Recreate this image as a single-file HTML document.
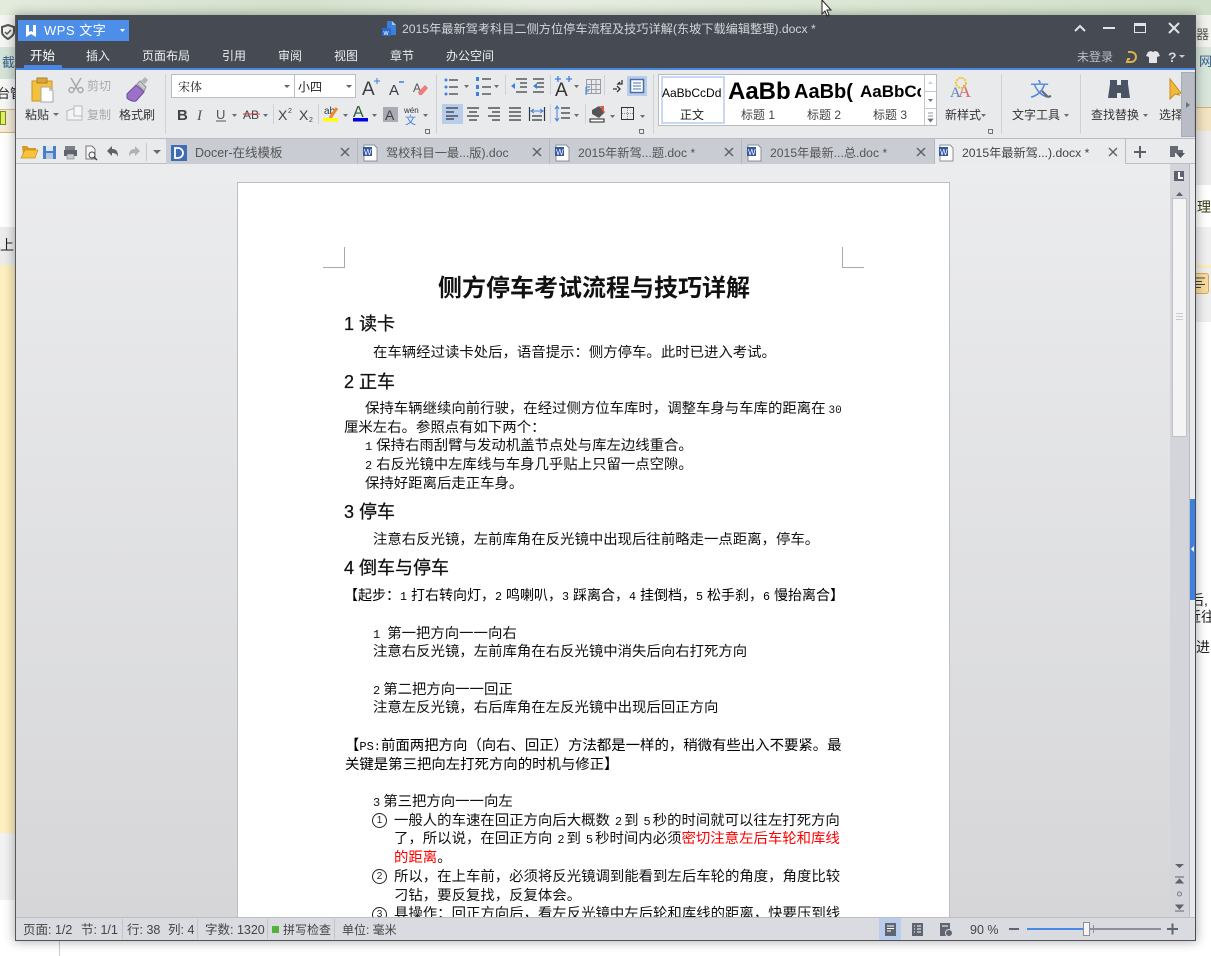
<!DOCTYPE html>
<html><head><meta charset="utf-8"><title>WPS 文字</title>
<style>
html,body{margin:0;padding:0;width:1211px;height:956px;overflow:hidden;background:#fff}
body{position:relative;font-family:"Liberation Sans","Noto Sans CJK SC",sans-serif}
.a{position:absolute}
.t{position:absolute;white-space:nowrap;font-size:12px;line-height:16px;color:#333}
#doc .l{position:absolute;white-space:nowrap;font-size:14.4px;line-height:20px;margin-top:1px;color:#111;font-family:"Liberation Sans","WenQuanYi Zen Hei",sans-serif}
#doc .h{position:absolute;white-space:nowrap;font-size:18px;line-height:24px;margin-top:1px;color:#111;-webkit-text-stroke:.25px #111;font-family:"Liberation Sans","Noto Sans CJK SC",sans-serif}
#doc .n{font-family:"Liberation Mono",monospace;font-size:12px}
#doc .d{font-family:"Liberation Mono",monospace;font-size:12px;margin:0 2px 0 5px}
#doc .b{font-family:"Liberation Mono",monospace;font-size:11.67px;margin-right:4px}
.m{color:#ecedef;font-size:12px;top:48px}
.sep{position:absolute;width:1px;background:#cfd1d6}
.tab{position:absolute;top:139px;height:25px;background:#c9ccd3;border-right:1px solid #b4b7be;box-sizing:border-box}
.tt{position:absolute;white-space:nowrap;font-size:12.2px;line-height:16px;top:145px;color:#555}
.s{position:absolute;white-space:nowrap;font-size:12.5px;line-height:14px;top:923px;color:#444}
.num{position:absolute;width:13px;height:13px;border:1px solid #222;border-radius:50%;font-size:10px;line-height:13px;margin-top:1px;text-align:center;color:#222;font-family:"Liberation Sans",sans-serif}
.st{position:absolute;font-family:"Liberation Sans",sans-serif;white-space:nowrap;color:#000;overflow:hidden}
</style></head><body>
<!-- desktop background -->
<div class="a" style="left:0;top:0;width:1211px;height:15px;background:linear-gradient(90deg,#e3ebdc,#d5e1cd 25%,#e6ede0 45%,#dce7d4 70%,#d0dfca)"></div>
<div class="a" style="left:0;top:15px;width:15px;height:32px;background:#f4f4f2"></div>
<div class="a" style="left:0;top:47px;width:15px;height:32px;background:#d3e3d7"></div>
<div class="a" style="left:0;top:79px;width:15px;height:30px;background:#f6f6f5"></div>
<div class="a" style="left:0;top:109px;width:15px;height:22px;background:#f4ead6;border-top:1px solid #d9b878;border-bottom:1px solid #d9b878"></div>
<div class="a" style="left:0;top:227px;width:15px;height:38px;background:#ececec"></div>
<div class="a" style="left:0;top:265px;width:15px;height:568px;background:#fdf0be"></div>
<div class="a" style="left:0;top:833px;width:15px;height:123px;background:#f2f2f2"></div>
<div class="a" style="left:0;top:900px;width:15px;height:56px;background:#fff"></div>
<div class="a" style="left:59px;top:940px;width:1px;height:16px;background:#ccc"></div>
<div class="t" style="left:0;top:55px;font-size:13px;color:#35608d;width:15px;overflow:hidden;direction:rtl">截</div>
<div class="t" style="left:-3px;top:86px;font-size:13px;color:#222;width:18px;overflow:hidden">台管</div>
<div class="t" style="left:0;top:237px;font-size:14px;color:#222">上</div>
<svg class="a" style="left:1px;top:24px" width="14" height="16"><path d="M7 1l6 2v5c0 3-3 5-6 7-3-2-6-4-6-7V3z" fill="none" stroke="#555" stroke-width="2"/><path d="M4 8l2 2 4-4" fill="none" stroke="#555" stroke-width="1.5"/></svg>
<div class="a" style="left:0;top:111px;width:6px;height:14px;background:#e9ef5a;border:1px solid #6a8f2d;box-sizing:border-box"></div>
<div class="a" style="left:1196px;top:15px;width:15px;height:32px;background:#f1f1ee"></div>
<div class="a" style="left:1196px;top:47px;width:15px;height:60px;background:#d8e6db"></div>
<div class="a" style="left:1196px;top:107px;width:15px;height:24px;background:#f3e4c4;border-top:1px solid #d7b36f;border-bottom:1px solid #d7b36f"></div>
<div class="a" style="left:1196px;top:131px;width:15px;height:54px;background:#ececec"></div>
<div class="a" style="left:1196px;top:185px;width:15px;height:42px;background:#fff"></div>
<div class="a" style="left:1196px;top:227px;width:15px;height:38px;background:#f0f0f0"></div>
<div class="a" style="left:1196px;top:265px;width:15px;height:3px;background:#fbeeb8"></div>
<div class="a" style="left:1196px;top:268px;width:15px;height:54px;background:#efefef"></div>
<div class="a" style="left:1196px;top:273px;width:13px;height:21px;background:#f8dc9e;border:1px solid #d9a75c;border-left:0;box-sizing:border-box;border-radius:0 3px 3px 0"></div>
<svg class="a" style="left:1196px;top:277px" width="12" height="14"><path d="M0 1h9M0 4.500h6M0 7.500h9M0 10.500h5" stroke="#444" stroke-width="1"/></svg>
<div class="t" style="left:1196px;top:27px;font-size:13px;color:#555;width:15px;overflow:hidden">器</div>
<div class="t" style="left:1199px;top:54px;font-size:13px;color:#35608d">网</div>
<div class="t" style="left:1183px;top:199px;font-size:14px;color:#3c3c10">处理</div>
<div class="t" style="left:1190px;top:592px;font-size:14px;color:#222">后,</div>
<div class="t" style="left:1187px;top:609px;font-size:14px;color:#222">近往</div>
<div class="t" style="left:1196px;top:639px;font-size:14px;color:#222;width:15px;overflow:hidden">进表</div>

<!-- window -->
<div class="a" style="left:15px;top:15px;width:1181px;height:926px;background:#e8e9eb;box-shadow:0 0 10px 1px rgba(0,0,0,.3)"></div>
<div class="a" style="left:15px;top:15px;width:1181px;height:53px;background:#464a53"></div>
<div class="a" style="left:15px;top:68px;width:1181px;height:2px;background:#4a86e3"></div>
<div class="a" style="left:18px;top:20px;width:111px;height:21px;background:#4d8fe8"></div>
<svg class="a" style="left:24px;top:24px" width="14" height="14"><path d="M2 1v12l5-3 5 3V1h-3v7L7 7 5 8V1z" fill="#fff"/></svg>
<div class="t" style="left:44px;top:22px;color:#fff;font-size:13px;line-height:18px;letter-spacing:.5px">WPS 文字</div>
<svg class="a" style="left:119px;top:28px" width="8" height="5"><path d="M1 1h5L3.500 4z" fill="#fff"/></svg>
<svg class="a" style="left:381px;top:20px" width="18" height="17"><path d="M6 1h5l4 4v10H6z" fill="#3d7fdc"/><path d="M11 1l4 4h-4z" fill="#a8c8f3"/><rect x="1" y="8" width="9" height="8" fill="#2b6bc8"/><text x="2.500" y="15" font-size="7" fill="#fff" font-family="Liberation Sans">w</text></svg>
<div class="t" style="left:402px;top:20px;color:#d3d5d9;font-size:12.2px;line-height:18px">2015年最新驾考科目二侧方位停车流程及技巧详解(东坡下载编辑整理).docx *</div>
<svg class="a" style="left:1070px;top:20px" width="116" height="16"><path d="M5 11l5-5 5 5" fill="none" stroke="#e2e4e7" stroke-width="2"/><rect x="33" y="7" width="12" height="2" fill="#e2e4e7"/><rect x="64.500" y="3.500" width="11" height="9" fill="none" stroke="#e2e4e7" stroke-width="1"/><rect x="64" y="3" width="12" height="3" fill="#e2e4e7"/><path d="M99 3l10 10M109 3l-10 10" stroke="#e2e4e7" stroke-width="2"/></svg>

<div class="t m" style="left:30px;color:#fff;font-size:12.500px">开始</div>
<div class="t m" style="left:86px">插入</div>
<div class="t m" style="left:142px">页面布局</div>
<div class="t m" style="left:222px">引用</div>
<div class="t m" style="left:278px">审阅</div>
<div class="t m" style="left:334px">视图</div>
<div class="t m" style="left:390px">章节</div>
<div class="t m" style="left:446px">办公空间</div>
<div class="a" style="left:24px;top:65px;width:38px;height:3px;background:#4a86e3"></div>
<div class="t" style="left:1077px;top:49px;color:#bcbfc5">未登录</div>
<svg class="a" style="left:1124px;top:49px" width="68" height="15"><path d="M4 3h3a5 5 0 0 1 0 10H3l1-3h2" fill="none" stroke="#d8b24a" stroke-width="2"/><path d="M24 3l3-1 2 1 2-1 3 1 2 4-3 1v6h-8V8l-3-1z" fill="#e4e5e8"/><text x="44" y="13" font-size="14" font-weight="bold" fill="#d5d7da" font-family="Liberation Sans">?</text><path d="M55 6h6l-3 3z" fill="#c8cace"/></svg>

<!-- ribbon -->
<div class="a" style="left:16px;top:70px;width:1179px;height:68px;background:#e9eaec;border-bottom:1px solid #b9bbc1"></div>
<div class="sep" style="left:165px;top:74px;height:60px"></div>
<div class="sep" style="left:436px;top:74px;height:60px"></div>
<div class="sep" style="left:505px;top:75px;height:20px"></div>
<div class="sep" style="left:550px;top:75px;height:20px"></div>
<div class="sep" style="left:604px;top:75px;height:20px"></div>
<div class="sep" style="left:550px;top:104px;height:20px"></div>
<div class="sep" style="left:585px;top:104px;height:20px"></div>
<div class="sep" style="left:273px;top:104px;height:20px"></div>
<div class="sep" style="left:318px;top:104px;height:20px"></div>
<div class="sep" style="left:653px;top:74px;height:60px"></div>
<div class="sep" style="left:1001px;top:74px;height:60px"></div>
<div class="sep" style="left:1080px;top:74px;height:60px"></div>

<svg class="a" style="left:0;top:0" width="1211" height="956">
<!-- paste -->
<path d="M32 81h20v20H32z" fill="#f2c23f" stroke="#c9922a"/><rect x="37" y="78" width="10" height="5" fill="#d9a63a" stroke="#b08026"/><path d="M41 87h8l4 4v11H41z" fill="#fff" stroke="#a4a6aa"/><path d="M49 87l4 4h-4z" fill="#ccc"/>
<!-- cut -->
<path d="M71 78l7 12M81 78l-7 12" stroke="#a8a9ac" stroke-width="1.500"/><circle cx="71.500" cy="90" r="2.500" fill="none" stroke="#a8a9ac" stroke-width="1.500"/><circle cx="80.500" cy="90" r="2.500" fill="none" stroke="#a8a9ac" stroke-width="1.500"/>
<!-- copy -->
<path d="M72 109h8l2 2v9H67v-9z" fill="#f4f4f4" stroke="#b8b9bb" /><rect x="74" y="106" width="8" height="10" fill="#f6f6f6" stroke="#b8b9bb"/>
<!-- brush -->
<path d="M127 94l9-9 8 7-8 9c-3 1-7-1-9-3z" fill="#9c72c9" stroke="#6d4a9c"/><path d="M137 84l3-3 6 6-2 4z" fill="#c9cacd" stroke="#8e8f93"/><path d="M141 81l4-4 3 3-3 4z" fill="#b3b4b8"/>
<!-- arrows small -->
<g fill="#6a6d74">
<path d="M53 113h6l-3 3z"/><path d="M232 114h5l-2.500 3z"/><path d="M263 114h5l-2.500 3z"/><path d="M343 114h5l-2.500 3z"/><path d="M372 114h5l-2.500 3z"/><path d="M423 114h5l-2.500 3z"/>
<path d="M285 87h6l-3 3z"/><path d="M346 87h6l-3 3z"/><path d="M464 85h5l-2.500 3z"/><path d="M494 85h5l-2.500 3z"/><path d="M574 85h5l-2.500 3z"/><path d="M574 114h5l-2.500 3z"/><path d="M610 115h5l-2.500 3z"/><path d="M640 115h5l-2.500 3z"/>
<path d="M981 114h5l-2.500 3z"/><path d="M1064 114h5l-2.500 3z"/><path d="M1143 114h5l-2.500 3z"/>
</g>
<!-- list icons -->
<g stroke="#3a3d44" stroke-width="1.200" fill="none"><path d="M449 80h9M449 87h9M449 94h9M482 79h9M482 87h9M482 94h9"/><path d="M516 79h11M520 83h7M520 87h7M516 92h11M533 79h11M537 83h7M537 87h7M533 92h11"/></g>
<g fill="#3f7fe0"><circle cx="446" cy="80" r="1.500"/><circle cx="446" cy="87" r="1.500"/><circle cx="446" cy="94" r="1.500"/><rect x="476" y="77" width="3" height="4"/><rect x="476" y="85" width="3" height="4"/><rect x="476" y="92" width="3" height="4"/><path d="M511 86l4-3v6zM533 86l4-3v6z" /></g>
<!-- A grow -->
<text x="555" y="96" font-size="19" fill="#333" font-family="Liberation Sans" >A</text><path d="M555 79h6M558 76v6M566 79h6M569 76v6" stroke="#3f7fe0" stroke-width="1.300" fill="none"/>
<g stroke="#9a9da6" fill="none"><path d="M586.500 79.500h14v14h-14zM591.500 79.500v14M596 79.500v14M586.500 84.500h14M586.500 89.500h14"/></g><path d="M586 87v8M586 87h4M586 91h3" stroke="#3f7fe0" fill="none"/>
<path d="M622 80v4h-4l2-2M613 89h4M617 86l3 3-3 3" stroke="#333" stroke-width="1.300" fill="none"/>
<rect x="627" y="76" width="20" height="20" fill="#b9cce9"/><rect x="630.500" y="79.500" width="13" height="13" fill="#fff" stroke="#4a6fa8" stroke-width="1.500"/><path d="M633 83h8M633 86h8M633 89h8" stroke="#4a6fa8"/>
<!-- align -->
<rect x="442" y="104" width="21" height="20" fill="#b9cce9"/>
<g stroke="#33363c" stroke-width="1.200" fill="none"><path d="M446 109h12M446 113h8M446 117h12M446 120h8" transform="translate(0 -1)"/><path d="M467 108h12M469 112h8M467 116h12M469 120h8"/><path d="M488 108h12M492 112h8M488 116h12M492 120h8"/><path d="M509 108h12M509 112h12M509 116h12M509 120h12"/><path d="M529.500 107v14M544.500 107v14M532 116h10M532 120h10"/></g>
<path d="M532 111h10M534 109l-3 2 3 2M540 109l3 2-3 2" stroke="#3f7fe0" fill="none"/>
<g stroke="#33363c" stroke-width="1.200"><path d="M561 108h9M561 113h9M561 118h9"/></g><path d="M557 107v13M555 109l2-3 2 3M555 118l2 3 2-3" stroke="#3f7fe0" fill="none"/>
<path d="M592 110l7-4 6 6-6 6-7-4z" fill="#555"/><path d="M600 106l4 0 0 8z" fill="#e8544a"/><rect x="590" y="119" width="14" height="3" fill="#fff" stroke="#222"/>
<rect x="621.500" y="107.500" width="12" height="12" fill="none" stroke="#333"/><path d="M627.500 108v11M622 113.500h11" stroke="#888" stroke-dasharray="1 1"/>
<!-- dialog corners -->
<g fill="none" stroke="#6d7077"><path d="M425.500 133v-3.500h4v4h-4"/><path d="M639.500 133v-3.500h4v4h-4"/><path d="M988.500 133v-3.500h4v4h-4"/></g>
<!-- font buttons -->
<text x="362" y="95" font-size="19" fill="#3a3d44" font-family="Liberation Sans">A</text><path d="M374 81h6M377 78v6" stroke="#3f7fe0"/>
<text x="389" y="95" font-size="15" fill="#3a3d44" font-family="Liberation Sans">A</text><path d="M399 82h5" stroke="#3f7fe0" stroke-width="1.500"/>
<text x="413" y="92" font-size="12" fill="#555" font-family="Liberation Sans">A</text><path d="M418 92l7-7 3 3-6 7h-3z" fill="#ef7c7c"/>
<text x="177" y="120" font-size="15" font-weight="bold" fill="#444" font-family="Liberation Sans">B</text>
<text x="197" y="120" font-size="15" font-style="italic" fill="#555" font-family="Liberation Serif">I</text>
<text x="216" y="119" font-size="13" fill="#555" font-family="Liberation Sans">U</text><path d="M216 121h10" stroke="#555"/>
<text x="243" y="119" font-size="12" fill="#444" font-family="Liberation Sans">AB</text><path d="M243 114h17" stroke="#d8372f"/>
<text x="278" y="120" font-size="14" fill="#444" font-family="Liberation Sans">X</text><text x="288" y="113" font-size="7" fill="#444" font-family="Liberation Sans">2</text>
<text x="299" y="120" font-size="14" fill="#444" font-family="Liberation Sans">X</text><text x="309" y="122" font-size="7" fill="#444" font-family="Liberation Sans">2</text>
<text x="324" y="114" font-size="10" fill="#3a3d44" font-family="Liberation Sans">ab</text><path d="M330 118l7-10" stroke="#ec8a2c" stroke-width="3"/><rect x="323" y="118" width="15" height="3.500" fill="#ffff00"/>
<text x="353" y="117" font-size="16" fill="#2c5a2e" font-family="Liberation Sans">A</text><rect x="353" y="118" width="15" height="3.500" fill="#0000e0"/>
<rect x="383" y="107" width="15" height="15" fill="#a9acb5"/><text x="385" y="120" font-size="14" fill="#444" font-family="Liberation Sans">A</text>
<text x="404" y="113" font-size="8" fill="#333" font-family="Liberation Sans">wén</text><text x="405" y="124" font-size="11" fill="#3f7fe0" font-family="Liberation Sans,Noto Sans CJK SC">文</text>
<!-- style icons -->
<text x="958" y="97" font-size="18" fill="#d86a76" font-family="Liberation Serif">A</text><text x="950" y="97" font-size="15" fill="#5b80bd" font-family="Liberation Serif">A</text><circle cx="961" cy="83" r="5" fill="none" stroke="#f0c530" stroke-width="2" stroke-dasharray="2 1"/>
<text x="1030" y="96" font-size="19" fill="#4f86df" font-family="Liberation Sans,Noto Sans CJK SC">文</text><path d="M1042 91l6 6M1048 97l3-1" stroke="#666" stroke-width="2" fill="none"/>
<path d="M1110 80h7v5h4v-5h7v4l2 14h-9v-5h-4v5h-9l2-14z" fill="#4a5364"/>
<path d="M1170 79v20l5-5 4 1-1-1 3-1z" fill="#f3b93a" stroke="#c98a1c"/>
</svg>

<div class="t" style="left:25px;top:107px;font-size:12px;color:#333">粘贴</div>
<div class="t" style="left:87px;top:78px;color:#a9aaad">剪切</div>
<div class="t" style="left:87px;top:107px;color:#a9aaad">复制</div>
<div class="t" style="left:119px;top:107px">格式刷</div>
<div class="a" style="left:171px;top:74px;width:185px;height:24px;background:#fff;border:1px solid #bcbec4;box-sizing:border-box"></div>
<div class="a" style="left:294px;top:74px;width:1px;height:24px;background:#bcbec4"></div>
<div class="t" style="left:178px;top:79px;color:#222;font-family:'Liberation Sans','Noto Serif CJK SC',serif">宋体</div>
<div class="t" style="left:298px;top:79px;color:#222">小四</div>
<svg class="a" style="left:284px;top:85px" width="70" height="5"><path d="M0 0h6L3 3z" fill="#666"/><path d="M62 0h6l-3 3z" fill="#666"/></svg>

<!-- styles gallery -->
<div class="a" style="left:658px;top:74px;width:279px;height:52px;background:#fff;border:1px solid #b9bbc1;box-sizing:border-box"></div>
<div class="a" style="left:661px;top:76px;width:64px;height:48px;border:2px solid #c8d9f3;box-sizing:border-box"></div>
<div class="st" style="left:662px;top:85px;width:62px;font-size:12px;line-height:16px">AaBbCcDd</div>
<div class="st" style="left:728px;top:78px;width:64px;font-size:24px;line-height:28px;font-weight:bold">AaBb</div>
<div class="st" style="left:794px;top:80px;width:61px;font-size:20px;line-height:24px;font-weight:bold">AaBb(</div>
<div class="st" style="left:860px;top:82px;width:61px;font-size:17px;line-height:20px;font-weight:bold">AaBbCc</div>
<div class="t" style="left:680px;top:107px;color:#222">正文</div>
<div class="t" style="left:741px;top:107px;color:#444">标题 1</div>
<div class="t" style="left:807px;top:107px;color:#444">标题 2</div>
<div class="t" style="left:873px;top:107px;color:#444">标题 3</div>
<div class="a" style="left:924px;top:75px;width:1px;height:50px;background:#c4c6cb"></div>
<svg class="a" style="left:925px;top:75px" width="11" height="50"><path d="M0 16.500h11M0 33.500h11" stroke="#c4c6cb"/><path d="M3 9h5L5.500 6z" fill="#d0d2d6"/><path d="M3 24h5l-2.500 3z" fill="#70737a"/><path d="M3 38h5M3 41h5M3 44h5L5.500 47z" stroke="#70737a" fill="#70737a" stroke-width=".7"/></svg>
<div class="t" style="left:945px;top:107px">新样式</div>
<div class="t" style="left:1012px;top:107px">文字工具</div>
<div class="t" style="left:1091px;top:107px">查找替换</div>
<div class="t" style="left:1159px;top:107px">选择</div>
<div class="a" style="left:1181px;top:72px;width:14px;height:65px;background:#b9bcc4;border:1px solid #a9acb4;box-sizing:border-box"></div>
<svg class="a" style="left:1185px;top:101px" width="6" height="8"><path d="M1 1l4 3-4 3z" fill="#6c7079"/></svg>

<!-- tabs -->
<div class="a" style="left:16px;top:139px;width:1179px;height:25px;background:#e9eaec;border-bottom:1px solid #bcbec4;box-sizing:border-box"></div>
<div class="tab" style="left:166px;width:192px"></div>
<div class="tab" style="left:358px;width:192px"></div>
<div class="tab" style="left:550px;width:192px"></div>
<div class="tab" style="left:742px;width:193px"></div>
<div class="a" style="left:935px;top:139px;width:191px;height:26px;background:#eaebed;border-right:1px solid #bcbec4;box-sizing:border-box"></div>
<div class="a" style="left:171px;top:145px;width:16px;height:16px;background:#3f6db5"></div>
<svg class="a" style="left:171px;top:145px" width="16" height="16"><path d="M4 3h3a5 5 0 0 1 0 10H4z" fill="none" stroke="#fff" stroke-width="1.800"/></svg>
<div class="tt" style="left:195px;font-size:12.5px">Docer-在线模板</div>
<div class="tt" style="left:386px">驾校科目一最...版).doc</div>
<div class="tt" style="left:578px">2015年新驾...题.doc *</div>
<div class="tt" style="left:770px">2015年最新...总.doc *</div>
<div class="tt" style="left:962px;color:#444">2015年最新驾...).docx *</div>
<svg class="a" style="left:0;top:0" width="1211" height="170">
<!-- tab toolbar -->
<path d="M22 146h5l2 2h7v3H27l-4 4z" fill="#d89a22"/><path d="M25 150h13l-3 8H21z" fill="#f5c33c" stroke="#c98f22" stroke-width=".7"/>
<rect x="43" y="146" width="13" height="13" fill="#4a7ec6"/><rect x="46" y="146" width="7" height="5" fill="#dbe6f5"/><rect x="46" y="153" width="7" height="6" fill="#b4c8e6"/>
<rect x="65" y="146" width="10" height="4" fill="#7c8088"/><rect x="64" y="150" width="13" height="6" fill="#5e626a"/><rect x="67" y="154" width="7" height="5" fill="#c8cad0" stroke="#666" stroke-width=".5"/>
<path d="M86 146h6l3 3v10H86z" fill="#f5f5f5" stroke="#777"/><circle cx="92" cy="155" r="3" fill="none" stroke="#444"/><path d="M94 157l3 3" stroke="#444" stroke-width="1.300"/>
<path d="M107 151l5-5v3c5 0 6 3 6 8-1-3-3-4-6-4v3z" fill="#5e626b"/><path d="M140 151l-5-5v3c-5 0-6 3-6 8 1-3 3-4 6-4v3z" fill="#b0b2b8"/>
<rect x="146" y="143" width="1" height="18" fill="#c8cad0"/><path d="M153 150h8l-4 4z" fill="#666a72"/>
<g id="w"><path d="M364 145h10l3 3v13h-13z" fill="#fff" stroke="#8b8f97"/><rect x="363" y="147" width="9" height="9" fill="#33589f"/><text x="364" y="155" font-size="8" fill="#fff" font-family="Liberation Sans">W</text></g>
<g transform="translate(192 0)"><path d="M364 145h10l3 3v13h-13z" fill="#fff" stroke="#8b8f97"/><rect x="363" y="147" width="9" height="9" fill="#33589f"/><text x="364" y="155" font-size="8" fill="#fff" font-family="Liberation Sans">W</text></g>
<g transform="translate(384 0)"><path d="M364 145h10l3 3v13h-13z" fill="#fff" stroke="#8b8f97"/><rect x="363" y="147" width="9" height="9" fill="#33589f"/><text x="364" y="155" font-size="8" fill="#fff" font-family="Liberation Sans">W</text></g>
<g transform="translate(576 0)"><path d="M364 145h10l3 3v13h-13z" fill="#fff" stroke="#8b8f97"/><rect x="363" y="147" width="9" height="9" fill="#33589f"/><text x="364" y="155" font-size="8" fill="#fff" font-family="Liberation Sans">W</text></g>
<g stroke="#5a5d64" stroke-width="1.300" fill="none"><path d="M341 148l8 8M349 148l-8 8"/><path d="M533 148l8 8M541 148l-8 8"/><path d="M725 148l8 8M733 148l-8 8"/><path d="M917 148l8 8M925 148l-8 8"/><path d="M1109 148l8 8M1117 148l-8 8"/></g>
<path d="M1134 152h12M1140 146v12" stroke="#5c6068" stroke-width="2"/>
<path d="M1170 146h8v4h5v3h-8v4h-5z" fill="#666a72"/><path d="M1176 153h9l-4.500 5z" fill="#50545c"/>
</svg>

<!-- document area -->
<div class="a" style="left:16px;top:164px;width:1154px;height:753px;background:linear-gradient(#ebecee,#d6d6d8)"></div>
<div class="a" style="left:1170px;top:164px;width:19px;height:753px;background:#d3d5da"></div>
<div class="a" style="left:1189px;top:164px;width:6px;height:753px;background:#e8e9eb;border-left:1px solid #b9bbc1;box-sizing:border-box"></div>
<div class="a" style="left:1190px;top:499px;width:5px;height:101px;background:#3f7fe0"></div>
<svg class="a" style="left:1190px;top:545px" width="5" height="8"><path d="M4 1v6L1 4z" fill="#fff"/></svg>
<div class="a" style="left:1172px;top:198px;width:15px;height:239px;background:#f4f4f5;border:1px solid #c0c2c8;box-sizing:border-box"></div>
<svg class="a" style="left:1170px;top:164px" width="19" height="753">
<rect x="4" y="7" width="10" height="10" fill="#5d6270"/><path d="M9 8v6h4" stroke="#fff" stroke-width="2" fill="none"/>
<path d="M6 32h7l-3.500-4z" fill="#5d6270"/>
<path d="M6 149.500h7M6 152.500h7M6 155.500h7" stroke="#c8cace"/>
<path d="M5 700h9l-4.500 4z" fill="#5d6270"/>
<path d="M5 713h9M6 719h7l-3.500-4zM6 710h0" stroke="#5d6270" fill="#5d6270" stroke-width="1"/>
<circle cx="9.500" cy="730" r="2" fill="none" stroke="#777b84"/>
<path d="M5 747h9M6 741h7l-3.500 4z" stroke="#5d6270" fill="#5d6270" stroke-width="1"/>
</svg>

<div id="doc" class="a" style="left:0;top:0;width:1211px;height:917px;overflow:hidden">
<div class="a" style="left:237px;top:182px;width:713px;height:760px;background:#fff;border:1px solid #bdbec2;box-sizing:border-box;border-bottom:0"></div>
<div class="a" style="left:323px;top:267px;width:22px;height:1px;background:#a9a9a9"></div>
<div class="a" style="left:344px;top:247px;width:1px;height:21px;background:#a9a9a9"></div>
<div class="a" style="left:842px;top:267px;width:22px;height:1px;background:#a9a9a9"></div>
<div class="a" style="left:842px;top:247px;width:1px;height:21px;background:#a9a9a9"></div>

<div class="h" style="left:438px;top:273px;font-size:24px;line-height:30px;font-weight:bold;-webkit-text-stroke:0">侧方停车考试流程与技巧详解</div>
<div class="h" style="left:344px;top:311px">1 读卡</div>
<div class="l" style="left:373px;top:342px">在车辆经过读卡处后，语音提示：侧方停车。此时已进入考试。</div>
<div class="h" style="left:344px;top:369px">2 正车</div>
<div class="l" style="left:365px;top:398px">保持车辆继续向前行驶，在经过侧方位车库时，调整车身与车库的距离在<span class="n" style="font-size:11px;margin-left:3px">30</span></div>
<div class="l" style="left:344px;top:417px">厘米左右。参照点有如下两个：</div>
<div class="l" style="left:365px;top:435px"><span class="n" style="margin-right:4px">1</span>保持右雨刮臂与发动机盖节点处与库左边线重合。</div>
<div class="l" style="left:365px;top:454px"><span class="n" style="margin-right:4px">2</span>右反光镜中左库线与车身几乎贴上只留一点空隙。</div>
<div class="l" style="left:365px;top:473px">保持好距离后走正车身。</div>
<div class="h" style="left:344px;top:499px">3 停车</div>
<div class="l" style="left:373px;top:529px">注意右反光镜，左前库角在反光镜中出现后往前略走一点距离，停车。</div>
<div class="h" style="left:344px;top:555px">4 倒车与停车</div>
<div class="l" style="left:344px;top:584px;font-size:14px;color:#000">【起步：<span class="b">1</span>打右转向灯，<span class="b">2</span>鸣喇叭，<span class="b">3</span>踩离合，<span class="b">4</span>挂倒档，<span class="b">5</span>松手刹，<span class="b">6</span>慢抬离合】</div>
<div class="l" style="left:373px;top:623px"><span class="n" style="margin-right:7px">1</span>第一把方向一一向右</div>
<div class="l" style="left:373px;top:641px">注意右反光镜，左前库角在右反光镜中消失后向右打死方向</div>
<div class="l" style="left:373px;top:679px"><span class="n" style="margin-right:3px">2</span>第二把方向一一回正</div>
<div class="l" style="left:373px;top:697px">注意左反光镜，右后库角在左反光镜中出现后回正方向</div>
<div class="l" style="left:345px;top:735px;color:#000">【<span class="n">PS:</span>前面两把方向（向右、回正）方法都是一样的，稍微有些出入不要紧。最</div>
<div class="l" style="left:345px;top:754px;color:#000">关键是第三把向左打死方向的时机与修正】</div>
<div class="l" style="left:373px;top:791px"><span class="n" style="margin-right:3px">3</span>第三把方向一一向左</div>
<div class="num" style="left:372px;top:812px">1</div>
<div class="l" style="left:394px;top:810px">一般人的车速在回正方向后大概数<span class="d">2</span>到<span class="d">5</span>秒的时间就可以往左打死方向</div>
<div class="l" style="left:394px;top:828px">了，所以说，在回正方向<span class="d">2</span>到<span class="d">5</span>秒时间内必须<span style="color:#f00">密切注意左后车轮和库线</span></div>
<div class="l" style="left:394px;top:847px"><span style="color:#f00">的距离</span>。</div>
<div class="num" style="left:372px;top:868px">2</div>
<div class="l" style="left:394px;top:866px">所以，在上车前，必须将反光镜调到能看到左后车轮的角度，角度比较</div>
<div class="l" style="left:394px;top:885px">刁钻，要反复找，反复体会。</div>
<div class="num" style="left:372px;top:906px">3</div>
<div class="l" style="left:394px;top:903px">具操作：回正方向后，看左反光镜中左后轮和库线的距离，快要压到线</div>
</div>

<!-- status bar -->
<div class="a" style="left:16px;top:917px;width:1179px;height:23px;background:#d9dbe0;border-top:1px solid #bcbec4;box-sizing:border-box"></div>
<div class="s" style="left:23px">页面: 1/2</div>
<div class="s" style="left:81px">节: 1/1</div>
<div class="sep" style="left:122px;top:919px;height:20px;background:#c2c4ca"></div>
<div class="s" style="left:127px">行: 38</div>
<div class="s" style="left:168px">列: 4</div>
<div class="sep" style="left:197px;top:919px;height:20px;background:#c2c4ca"></div>
<div class="s" style="left:205px">字数: 1320</div>
<div class="sep" style="left:267px;top:919px;height:20px;background:#c2c4ca"></div>
<div class="a" style="left:272px;top:926px;width:7px;height:7px;background:#52b13a"></div>
<div class="s" style="left:283px;font-size:12px">拼写检查</div>
<div class="sep" style="left:334px;top:919px;height:20px;background:#c2c4ca"></div>
<div class="s" style="left:342px;font-size:12px">单位: 毫米</div>
<div class="a" style="left:879px;top:918px;width:22px;height:22px;background:#b9cce9"></div>
<svg class="a" style="left:880px;top:918px" width="300" height="22">
<rect x="5" y="5" width="11" height="13" fill="#5f6570"/><path d="M7 8h7M7 10.500h7M7 13h4" stroke="#fff"/>
<rect x="32" y="5" width="11" height="13" fill="#5f6570"/><path d="M34 8h1M37 8h4M34 11h1M37 11h4M34 14h1M37 14h4" stroke="#fff"/>
<rect x="60" y="5" width="10" height="13" fill="#5f6570"/><path d="M62 8h6" stroke="#fff"/><circle cx="69" cy="15" r="3.500" fill="#5f6570" stroke="#d9dbe0"/>
<rect x="129" y="10" width="10" height="2" fill="#5f6570"/>
<rect x="147" y="10" width="56" height="2" fill="#4a86e3"/>
<rect x="203" y="10" width="78" height="2" fill="#8d9096"/>
<rect x="213" y="7" width="1" height="8" fill="#8d9096"/>
<rect x="203.500" y="4.500" width="6" height="13" fill="#f4f4f4" stroke="#8d9096"/>
<path d="M287 11h11M292.500 5.500v11" stroke="#5f6570" stroke-width="2"/>
</svg>
<div class="s" style="left:970px;color:#444">90 %</div>
<div class="a" style="left:15px;top:15px;width:1px;height:925px;background:#55585f"></div>
<div class="a" style="left:1195px;top:15px;width:1px;height:925px;background:#4a4d55"></div>
<div class="a" style="left:15px;top:940px;width:1181px;height:1px;background:#4f5259"></div>
<!-- cursor -->
<svg class="a" style="left:820px;top:0" width="16" height="18"><path d="M2 0v14l3-3 2 5 2-1-2-5h4z" fill="#fff" stroke="#222"/></svg>
</body></html>
